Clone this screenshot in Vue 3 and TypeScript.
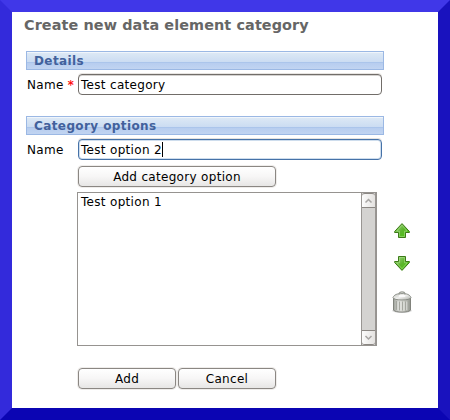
<script setup lang="ts">
import { ref } from 'vue'

const categoryName = ref('Test category')
const optionName = ref('Test option 2')
const options = ref<string[]>(['Test option 1'])
</script>

<template>
  <main class="window">
    <h1>Create new data element category</h1>

    <h2>Details</h2>
    <div class="row">
      <span class="label">Name <em>*</em></span>
      <div class="field">{{ categoryName }}</div>
    </div>

    <h2 class="second">Category options</h2>
    <div class="row">
      <span class="label">Name</span>
      <div class="field focused">{{ optionName }}<i class="caret"></i></div>
    </div>

    <button class="btn add-option">Add category option</button>

    <div class="picker">
      <div class="list">
        <div class="items">
          <div v-for="option in options" :key="option">{{ option }}</div>
        </div>
        <div class="scrollbar">
          <div class="arrow up">
            <svg width="13" height="13" viewBox="0 0 13 13"><path d="M3.5 8.5 6.5 5.5 9.5 8.5" /></svg>
          </div>
          <div class="arrow down">
            <svg width="13" height="13" viewBox="0 0 13 13"><path d="M3.5 5 6.5 8 9.5 5" /></svg>
          </div>
        </div>
      </div>
      <div class="tools">
        <svg class="move-up" width="16" height="15" viewBox="0 0 16 15">
          <defs>
            <linearGradient id="green" x1="0" y1="0" x2="1" y2="1">
              <stop offset="0" stop-color="#a8d890" />
              <stop offset=".5" stop-color="#5cb52c" />
              <stop offset="1" stop-color="#48c80c" />
            </linearGradient>
          </defs>
          <path d="M8 .6 15.4 8.5V9.5H11.5V14.5H4.5V9.5H.6V8.5Z" fill="url(#green)" stroke="#3c7a18" />
          <path d="M8 2.2 13.2 8.2H10.5V13.5H5.5V8.2H2.8Z" fill="none" stroke="#b5e398" stroke-opacity=".5" />
        </svg>
        <svg class="move-down" width="16" height="15" viewBox="0 0 16 15">
          <path d="M8 14.4 15.4 6.5V5.5H11.5V.5H4.5V5.5H.6V6.5Z" fill="url(#green)" stroke="#3c7a18" />
          <path d="M8 12.8 13.2 6.8H10.5V1.5H5.5V6.8H2.8Z" fill="none" stroke="#b5e398" stroke-opacity=".5" />
        </svg>
        <svg class="trash" width="20" height="24" viewBox="0 0 20 24">
          <defs>
            <linearGradient id="can" x1="0" x2="1">
              <stop offset="0" stop-color="#a0a39c" />
              <stop offset=".35" stop-color="#dddeda" />
              <stop offset=".6" stop-color="#cfd1cb" />
              <stop offset="1" stop-color="#91948d" />
            </linearGradient>
            <linearGradient id="lid" x1="0" x2="1" y2="1">
              <stop offset="0" stop-color="#c5c7c2" />
              <stop offset=".5" stop-color="#efefed" />
              <stop offset="1" stop-color="#a9aca5" />
            </linearGradient>
          </defs>
          <ellipse cx="10" cy="20.8" rx="10" ry="2.2" fill="#777" fill-opacity=".25" />
          <path d="M1.5 8V20C2.2 22.8 17.8 22.8 18.5 20V8Z" fill="url(#can)" stroke="#787b74" stroke-width=".9" />
          <path d="M4.5 11V19.8M7.5 11.5V20.5M10.5 11.5V20.5M13.5 11.5V20.5M16 11V19.8" stroke="#a0a39c" stroke-width=".9" />
          <path d="M6 11.5V20M9 12V20.5M12 12V20.5M14.8 11.5V20" stroke="#e6e7e3" stroke-width=".8" />
          <path d="M1 7.6C1.8 4.8 5.5 3.4 10 3.4S18.2 4.8 19 7.6C18.7 10.8 1.3 10.8 1 7.6Z" fill="url(#lid)" stroke="#858881" stroke-width=".9" />
          <path d="M7 4.6C7 1 13 1 13 4.6" fill="none" stroke="#9a9d96" stroke-width="1.3" />
          <ellipse cx="10" cy="5.9" rx="3.4" ry="1.2" fill="#fafafa" />
        </svg>
      </div>
    </div>

    <div class="actions">
      <button class="btn">Add</button>
      <button class="btn">Cancel</button>
    </div>
  </main>
</template>

<style>
body {
  margin: 0;
}
</style>

<style scoped>
.window {
  box-sizing: border-box;
  width: 450px;
  height: 420px;
  padding: 4px 0 0 14px;
  border: 12px solid;
  border-color: #4037e8 #1912be #0b05b3 #332adb;
  background: #fff;
  color: #000;
  font: 12px/19px "DejaVu Sans", sans-serif;
  letter-spacing: 0.31px;
}
h1 {
  height: 35px;
  margin: 0 0 0 -2px;
  color: #666;
  font-size: 14.4px;
  letter-spacing: 0.1px;
  line-height: 19px;
  white-space: nowrap;
}
h2 {
  box-sizing: border-box;
  width: 358px;
  height: 19px;
  margin: 0;
  padding-left: 7px;
  border: 1px solid #9bb8e4;
  background: linear-gradient(#f0f5fb 0 1px, #dce8f5 1px, #cbdcf2 10px, #abc5eb 10px 11px, #b7cdef 11px, #c1d4f1);
  color: #42619c;
  font-size: 12px;
  letter-spacing: 0.4px;
  line-height: 18px;
}
.second {
  margin-top: 21px;
}
.row {
  display: flex;
  padding-top: 4px;
}
.label {
  box-sizing: border-box;
  width: 52px;
  height: 21px;
  padding-left: 1px;
  line-height: 22px;
  white-space: nowrap;
}
.label em {
  color: #f00;
  font-style: normal;
  -webkit-text-stroke: 0.2px #f00;
}
.field {
  box-sizing: border-box;
  display: flex;
  width: 304px;
  height: 21px;
  padding-left: 2px;
  border: 1px solid #716d69;
  border-radius: 4px;
  box-shadow: 0 -1px #e8e5e2, inset 0 1px #d4d2d0;
  line-height: 20px;
}
.focused {
  border-color: #4672a8;
  box-shadow: 0 -1px #e5e2df, inset 0 0 0 1px #cedded;
}
.caret {
  width: 1px;
  height: 15px;
  margin-top: 2px;
  background: #000;
}
.btn {
  box-sizing: border-box;
  width: 98px;
  height: 21px;
  padding: 2px 0 0;
  border: 1px solid #8b8783;
  border-radius: 4px;
  background: linear-gradient(#fff, #f7f6f6 50%, #e7e6e5);
  box-shadow: 0 0 0 1px #efedeb;
  color: #000;
  font: inherit;
  letter-spacing: inherit;
  line-height: 17px;
}
.add-option {
  display: block;
  width: 198px;
  margin: 6px 0 0 52px;
}
.picker {
  display: flex;
  margin: 5px 0 0 51px;
}
.list {
  box-sizing: border-box;
  display: flex;
  width: 300px;
  height: 154px;
  border: 1px solid #969390;
}
.items {
  flex: 1;
  padding-left: 3px;
  line-height: 18px;
}
.scrollbar {
  box-sizing: border-box;
  display: flex;
  flex-direction: column;
  justify-content: space-between;
  width: 15px;
  border: 1px solid #999693;
  border-width: 0 1px 0 1px;
  background: #d4d3d1;
}
.arrow {
  box-sizing: border-box;
  height: 15px;
  border: 0 solid #8b8783;
  background: linear-gradient(90deg, #fcfcfc, #e4e2e0);
}
.arrow.up {
  border-width: 1px 0;
  border-radius: 3px 3px 0 0;
}
.arrow.down {
  border-width: 1px 0;
  border-radius: 0 0 3px 3px;
}
.arrow svg {
  display: block;
}
.arrow path {
  fill: none;
  stroke: #a7a5a3;
  stroke-width: 1.5;
}
.tools {
  display: flex;
  flex-direction: column;
  align-items: center;
  width: 20px;
  margin: 31px 0 0 15px;
}
.move-down {
  margin-top: 18px;
}
.trash {
  margin-top: 19px;
}
.actions {
  display: flex;
  gap: 2px;
  margin: 22px 0 0 52px;
}
</style>
